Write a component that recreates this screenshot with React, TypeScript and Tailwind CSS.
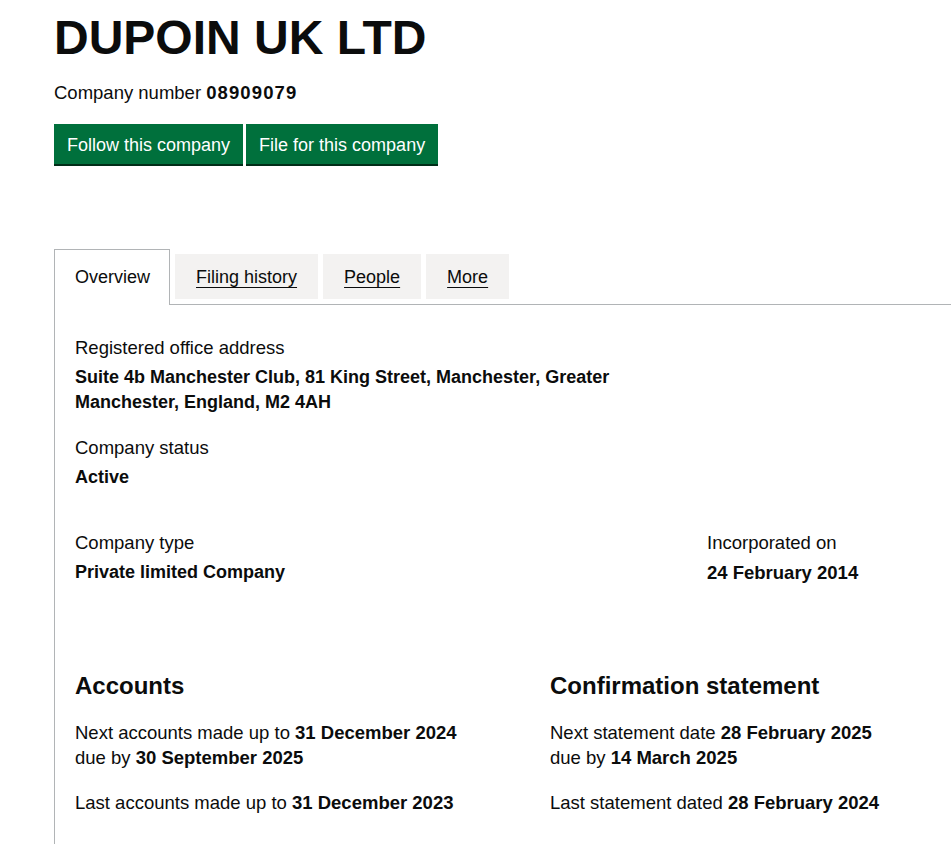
import React from "react";

const font = { fontFamily: '"Liberation Sans", Arial, sans-serif' };

export default function App() {
  return (
    <div className="min-h-screen w-full overflow-hidden bg-white text-[#0b0c0c]" style={font}>
      <div className="pl-[54px]">
        <h1 className="mt-[13px] text-[48px] leading-[50px] font-bold">DUPOIN UK LTD</h1>
        <p className="mt-[17px] text-[18.5px] leading-[25px]">
          Company number <strong className="font-bold tracking-[1.1px]">08909079</strong>
        </p>
        <div className="mt-[19px] flex gap-[3px]">
          <a className="flex h-[40px] items-center bg-[#00703c] px-[13px] pt-[2px] text-[18px] leading-[25px] text-white shadow-[0_2px_0_#002d18]">
            Follow this company
          </a>
          <a className="flex h-[40px] items-center bg-[#00703c] px-[13px] pt-[2px] text-[18px] leading-[25px] text-white shadow-[0_2px_0_#002d18]">
            File for this company
          </a>
        </div>

        <ul className="mt-[90px] flex items-start text-[18px] leading-[25px]">
          <li className="relative z-10 mr-[5px] -mt-[5px] -mb-[1px] border border-b-0 border-[#b1b4b6] bg-white pt-[15px] pr-[19px] pb-[15px] pl-[20px]">
            Overview
          </li>
          <li className="mr-[5px] mb-[5px] bg-[#f3f2f1] px-[21px] pt-[11px] pb-[9px]">
            <span className="underline decoration-1 underline-offset-[4px]">Filing history</span>
          </li>
          <li className="mr-[5px] mb-[5px] bg-[#f3f2f1] px-[21px] pt-[11px] pb-[9px]">
            <span className="underline decoration-1 underline-offset-[4px]">People</span>
          </li>
          <li className="mr-[5px] mb-[5px] bg-[#f3f2f1] px-[21px] pt-[11px] pb-[9px]">
            <span className="underline decoration-1 underline-offset-[4px]">More</span>
          </li>
        </ul>

        <div className="w-[1000px] border border-[#b1b4b6] pt-[30px] pl-[20px] pb-[40px] text-[18.5px] leading-[25px]">
          <div>
            <p>Registered office address</p>
            <p className="mt-[5px] text-[18px] font-bold">
              Suite 4b Manchester Club, 81 King Street, Manchester, Greater
              <br />
              Manchester, England, M2 4AH
            </p>
          </div>
          <div className="mt-[20px]">
            <p>Company status</p>
            <p className="mt-[5px] text-[18px] font-bold">Active</p>
          </div>
          <div className="mt-[40px] flex">
            <div className="w-[632px]">
              <p>Company type</p>
              <p className="mt-[5px] text-[18px] font-bold">Private limited Company</p>
            </div>
            <div>
              <p>Incorporated on</p>
              <p className="mt-[5px] font-bold">24 February 2014</p>
            </div>
          </div>
          <div className="mt-[86px] flex">
            <div className="w-[475px]">
              <h2 className="text-[24px] leading-[30px] font-bold">Accounts</h2>
              <p className="mt-[19px]">
                Next accounts made up to <strong className="font-bold">31 December 2024</strong>
                <br />
                due by <strong className="font-bold">30 September 2025</strong>
              </p>
              <p className="mt-[20px]">
                Last accounts made up to <strong className="font-bold">31 December 2023</strong>
              </p>
            </div>
            <div>
              <h2 className="text-[24px] leading-[30px] font-bold">Confirmation statement</h2>
              <p className="mt-[19px]">
                Next statement date <strong className="font-bold">28 February 2025</strong>
                <br />
                due by <strong className="font-bold">14 March 2025</strong>
              </p>
              <p className="mt-[20px]">
                Last statement dated <strong className="font-bold">28 February 2024</strong>
              </p>
            </div>
          </div>
        </div>
      </div>
    </div>
  );
}
